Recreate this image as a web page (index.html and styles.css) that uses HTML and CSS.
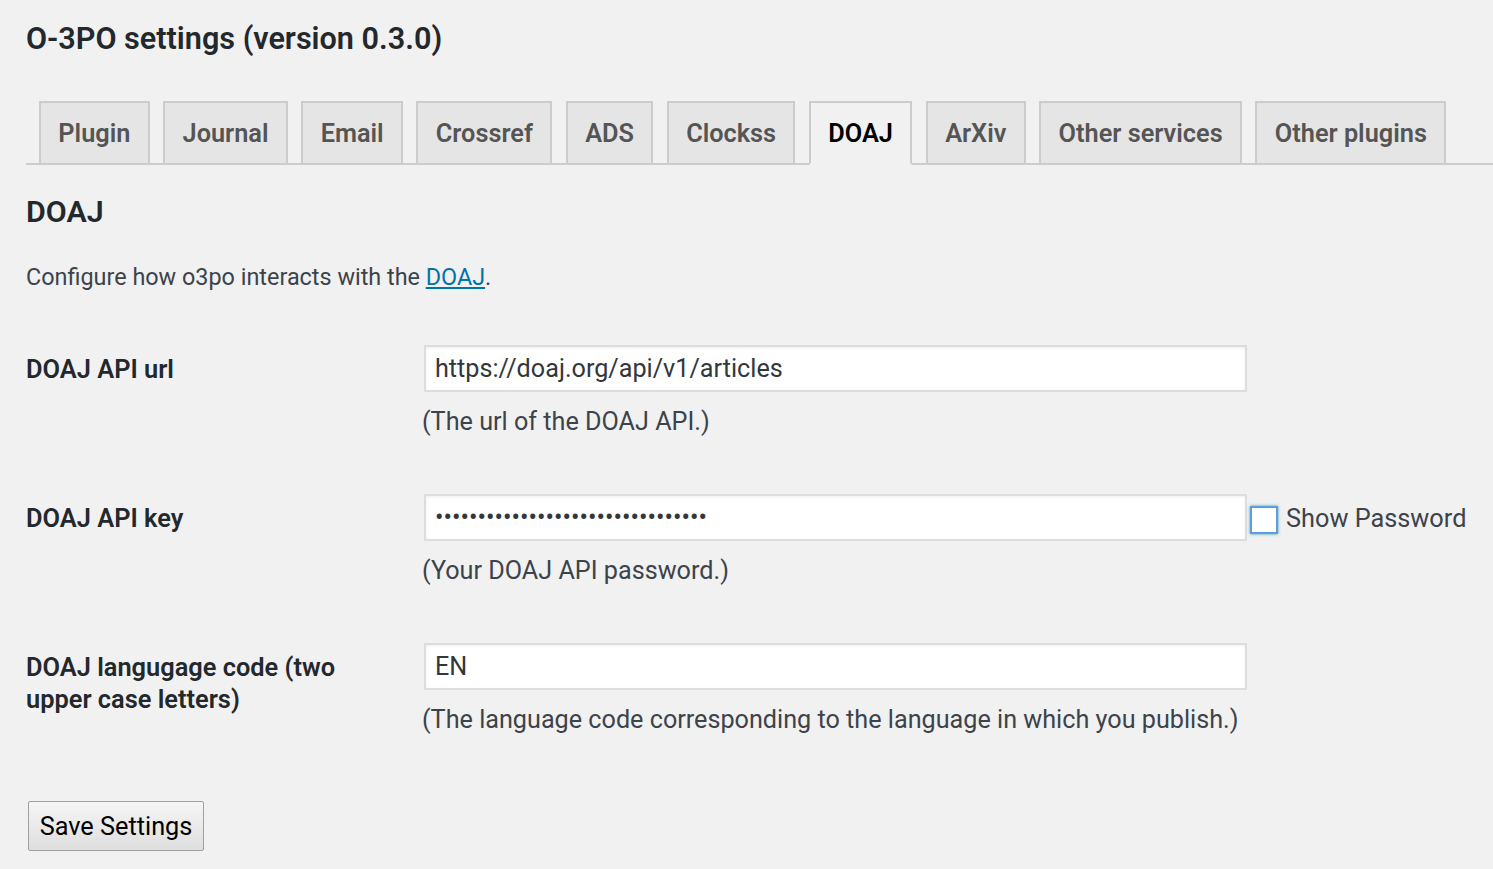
FILE: index.html
```html
<!DOCTYPE html>
<html lang="en">
<head>
<meta charset="utf-8">
<title>O-3PO settings</title>
<link rel="stylesheet" href="styles.css">
</head>
<body>
<div class="wrap">
  <h1 class="page-title">O-3PO settings (version 0.3.0)</h1>
  <nav class="tabs">
    <a class="tab" href="#">Plugin</a>
    <a class="tab" href="#">Journal</a>
    <a class="tab" href="#">Email</a>
    <a class="tab" href="#">Crossref</a>
    <a class="tab" href="#">ADS</a>
    <a class="tab" href="#">Clockss</a>
    <a class="tab tab-active" href="#">DOAJ</a>
    <a class="tab" href="#">ArXiv</a>
    <a class="tab" href="#">Other services</a>
    <a class="tab" href="#">Other plugins</a>
  </nav>
  <h2 class="section-title">DOAJ</h2>
  <p class="intro">Configure how o3po interacts with the <a class="link" href="#">DOAJ</a>.</p>
  <div class="form">
    <div class="row">
      <div class="label">DOAJ API url</div>
      <div class="field">
        <div class="control"><input class="text-input" type="text" value="https://doaj.org/api/v1/articles"></div>
        <p class="desc">(The url of the DOAJ API.)</p>
      </div>
    </div>
    <div class="row">
      <div class="label">DOAJ API key</div>
      <div class="field">
        <div class="control">
          <input class="text-input" type="password" value="abcdefghijklmnopqrstuvwxyz012345">
          <label class="show-pw"><span class="checkbox"></span>Show Password</label>
        </div>
        <p class="desc">(Your DOAJ API password.)</p>
      </div>
    </div>
    <div class="row">
      <div class="label">DOAJ langugage code (two upper case letters)</div>
      <div class="field">
        <div class="control"><input class="text-input" type="text" value="EN"></div>
        <p class="desc">(The language code corresponding to the language in which you publish.)</p>
      </div>
    </div>
  </div>
  <button class="save-btn" type="button">Save Settings</button>
</div>
</body>
</html>
```
FILE: styles.css
```css
html, body {
  margin: 0;
  padding: 0;
  background: #f1f1f1;
}
body {
  font-family: Roboto, "Noto Sans", "Liberation Sans", sans-serif;
  color: #3c434a;
}
.wrap {
  padding: 18px 0 0 26px;
}
.page-title {
  margin: 0;
  font-size: 30.6px;
  line-height: 42px;
  font-weight: 600;
  color: #23282d;
}
.tabs {
  display: flex;
  margin-top: 41px;
  border-bottom: 2px solid #ccc;
  padding-left: 13px;
  gap: 13.5px;
}
.tab {
  display: block;
  border: 2px solid #ccc;
  background: #e5e5e5;
  margin-bottom: -2px;
  padding: 0 17.35px;
  height: 60px;
  line-height: 62px;
  font-size: 25.3px;
  font-weight: 600;
  color: #555;
  text-decoration: none;
}
.tab-active {
  background: #f1f1f1;
  border-bottom-color: #f1f1f1;
  color: #000;
}
.section-title {
  margin: 27px 0 0;
  font-size: 30.4px;
  line-height: 40px;
  font-weight: 600;
  color: #23282d;
}
.intro {
  margin: 28px 0 0;
  font-size: 23.4px;
  line-height: 34px;
  color: #3c434a;
}
.link {
  color: #0073aa;
  text-decoration: underline;
}
.form {
  margin-top: 51px;
}
.row {
  display: flex;
  padding-bottom: 54px;
}
.label {
  width: 340px;
  margin-right: 58px;
  padding-top: 8px;
  font-size: 25.4px;
  line-height: 32px;
  font-weight: 600;
  color: #23282d;
}
.field {
  flex: none;
}
.control {
  display: flex;
  align-items: center;
}
.text-input {
  box-sizing: border-box;
  width: 823px;
  height: 47px;
  margin: 0;
  border: 2px solid #ddd;
  border-radius: 0;
  background: #fff;
  box-shadow: inset 0 1px 3px rgba(0, 0, 0, 0.07);
  padding: 0 9px;
  font-family: Roboto, "Noto Sans", "Liberation Sans", sans-serif;
  font-size: 25.2px;
  color: #32373c;
  outline: none;
}
.show-pw {
  display: flex;
  align-items: center;
  margin-left: 3px;
  padding-top: 2px;
  font-size: 25.3px;
  color: #3c434a;
  white-space: nowrap;
}
.checkbox {
  box-sizing: border-box;
  width: 28px;
  height: 28px;
  border: 2px solid #5b9dd9;
  background: #fff;
  box-shadow: 0 0 3px rgba(30, 140, 190, 0.8);
  margin-right: 8px;
  margin-top: 2px;
}
.desc {
  margin: 12px 0 0 -2px;
  font-size: 25.2px;
  line-height: 36px;
  color: #3c434a;
}
.save-btn {
  display: block;
  margin: 9px 0 18px 2px;
  box-sizing: border-box;
  width: 176px;
  height: 50px;
  border: 1.5px solid #a0a0a0;
  border-radius: 2px;
  background: linear-gradient(#f6f6f6, #dedede);
  font-family: Roboto, "Noto Sans", "Liberation Sans", sans-serif;
  font-size: 25.3px;
  color: #000;
  padding: 0;
}
```
